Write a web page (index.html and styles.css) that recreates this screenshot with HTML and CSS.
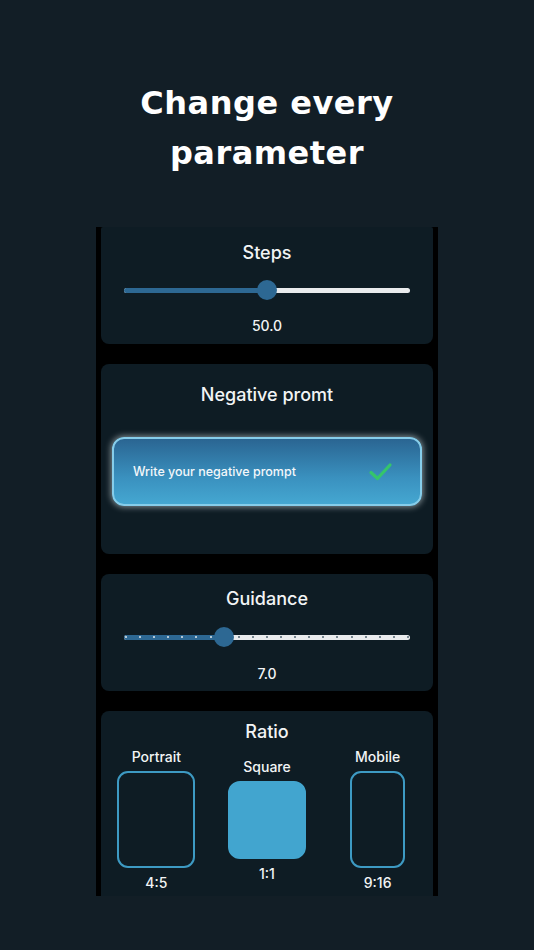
FILE: index.html
```html
<!DOCTYPE html>
<html>
<head>
<meta charset="utf-8">
<link rel="stylesheet" href="styles.css">
</head>
<body>
<header class="hero">
  <h1 class="hero-title">Change every<br>parameter</h1>
</header>
<main class="frame">
  <section class="card card-steps">
    <h2 class="card-title">Steps</h2>
    <div class="slider">
      <div class="track">
        <div class="fill" style="width:50%"></div>
      </div>
      <div class="thumb" style="left:50%"></div>
    </div>
    <div class="value">50.0</div>
  </section>

  <section class="card card-negative">
    <h2 class="card-title">Negative promt</h2>
    <div class="prompt-box">
      <span class="prompt-text">Write your negative prompt</span>
      <svg class="check" width="25" height="20" viewBox="0 0 25 20">
        <polyline points="3,10.5 9.5,16.5 22,3" fill="none" stroke="#35c56b" stroke-width="3.2" stroke-linecap="round" stroke-linejoin="round"/>
      </svg>
    </div>
  </section>

  <section class="card card-guidance">
    <h2 class="card-title">Guidance</h2>
    <div class="slider">
      <div class="track track-thin">
        <div class="fill" style="width:35%"></div>
        <div class="ticks">
          <i class="tick on"></i><i class="tick on"></i><i class="tick on"></i><i class="tick on"></i><i class="tick on"></i><i class="tick on"></i><i class="tick on"></i><i class="tick on"></i>
          <i class="tick"></i><i class="tick"></i><i class="tick"></i><i class="tick"></i><i class="tick"></i><i class="tick"></i><i class="tick"></i><i class="tick"></i><i class="tick"></i><i class="tick"></i><i class="tick"></i><i class="tick"></i><i class="tick"></i>
        </div>
      </div>
      <div class="thumb" style="left:35%"></div>
    </div>
    <div class="value">7.0</div>
  </section>

  <section class="card card-ratio">
    <h2 class="card-title">Ratio</h2>
    <div class="ratios">
      <div class="ratio">
        <div class="ratio-label">Portrait</div>
        <div class="ratio-box portrait"></div>
        <div class="ratio-value">4:5</div>
      </div>
      <div class="ratio">
        <div class="ratio-label">Square</div>
        <div class="ratio-box square selected"></div>
        <div class="ratio-value">1:1</div>
      </div>
      <div class="ratio">
        <div class="ratio-label">Mobile</div>
        <div class="ratio-box mobile"></div>
        <div class="ratio-value">9:16</div>
      </div>
    </div>
  </section>
</main>
</body>
</html>
```

FILE: styles.css
```css
* { box-sizing: border-box; }
html, body {
  margin: 0;
  padding: 0;
}
body {
  width: 534px;
  height: 950px;
  overflow: hidden;
  background: #121e26;
  color: #f2f4f5;
  font-family: "Inter", "Noto Sans", sans-serif;
}
.hero {
  padding-top: 78px;
  height: 227px;
}
.hero-title {
  margin: 0;
  text-align: center;
  font-family: "DejaVu Sans", sans-serif;
  font-weight: 700;
  font-size: 32px;
  line-height: 50px;
  letter-spacing: 0.5px;
  color: #ffffff;
}
.frame {
  margin: 0 96px;
  height: 669px;
  background: #000000;
  padding: 0 5px;
  overflow: hidden;
  display: flex;
  flex-direction: column;
  gap: 20px;
}
.card {
  background: #0e1c24;
  border-radius: 8px;
  flex-shrink: 0;
}
.card-title {
  margin: 0;
  text-align: center;
  font-weight: 500;
  font-size: 18px;
  line-height: 24px;
}
.card-steps {
  border-radius: 2px 2px 8px 8px;
  padding: 14px 0 8px;
}
.slider {
  position: relative;
  margin: 14px 23px 0;
  height: 22px;
  display: flex;
  align-items: center;
}
.track {
  position: relative;
  width: 100%;
  height: 5px;
  border-radius: 3px;
  background: #e9ebed;
  overflow: hidden;
}
.track-thin { height: 5px; }
.fill {
  height: 100%;
  background: #2d6893;
}
.thumb {
  position: absolute;
  top: 1px;
  width: 20px;
  height: 20px;
  margin-left: -10px;
  border-radius: 50%;
  background: #2d6893;
}
.value {
  margin-top: 15px;
  text-align: center;
  font-size: 14px;
  line-height: 20px;
  font-weight: 500;
}
.ticks {
  position: absolute;
  inset: 0 1px;
  display: flex;
  justify-content: space-between;
  align-items: center;
}
.tick {
  width: 2px;
  height: 2px;
  background: #76858f;
}
.tick.on { background: #b4c8d6; }

.card-negative {
  height: 190px;
  padding-top: 19px;
}
.prompt-box {
  margin: 30px 11px 0;
  height: 69px;
  border-radius: 12px;
  border: 2px solid #86cdea;
  background: linear-gradient(180deg, #2a6592 0%, #3a91bf 60%, #45a7d1 100%);
  box-shadow: 0 0 6px 1px rgba(235, 245, 250, 0.55);
  display: flex;
  align-items: center;
  justify-content: space-between;
  padding: 0 27px 0 19px;
}
.prompt-text {
  font-size: 12.5px;
  font-weight: 500;
  color: #f3f7fa;
}
.check { display: block; }

.card-guidance {
  padding: 13px 0 7px;
}
.card-guidance .slider { margin-top: 15px; }
.card-guidance .value { margin-top: 16px; }

.card-ratio {
  padding-top: 9px;
  height: 220px;
  border-radius: 8px 8px 0 0;
}
.ratios {
  margin-top: 3px;
  display: grid;
  grid-template-columns: repeat(3, 1fr);
  align-items: center;
}
.ratio {
  display: flex;
  flex-direction: column;
  align-items: center;
}
.ratio-label, .ratio-value {
  font-size: 14px;
  line-height: 20px;
  font-weight: 500;
}
.ratio-box {
  margin: 4px 0 5px;
  border: 2px solid #3d9ac3;
  border-radius: 11px;
}
.portrait { width: 78px; height: 97px; }
.mobile { width: 55px; height: 97px; }
.square {
  width: 78px;
  height: 78px;
  border-radius: 12px;
}
.selected {
  background: #42a5cf;
  border-color: #42a5cf;
}
```
